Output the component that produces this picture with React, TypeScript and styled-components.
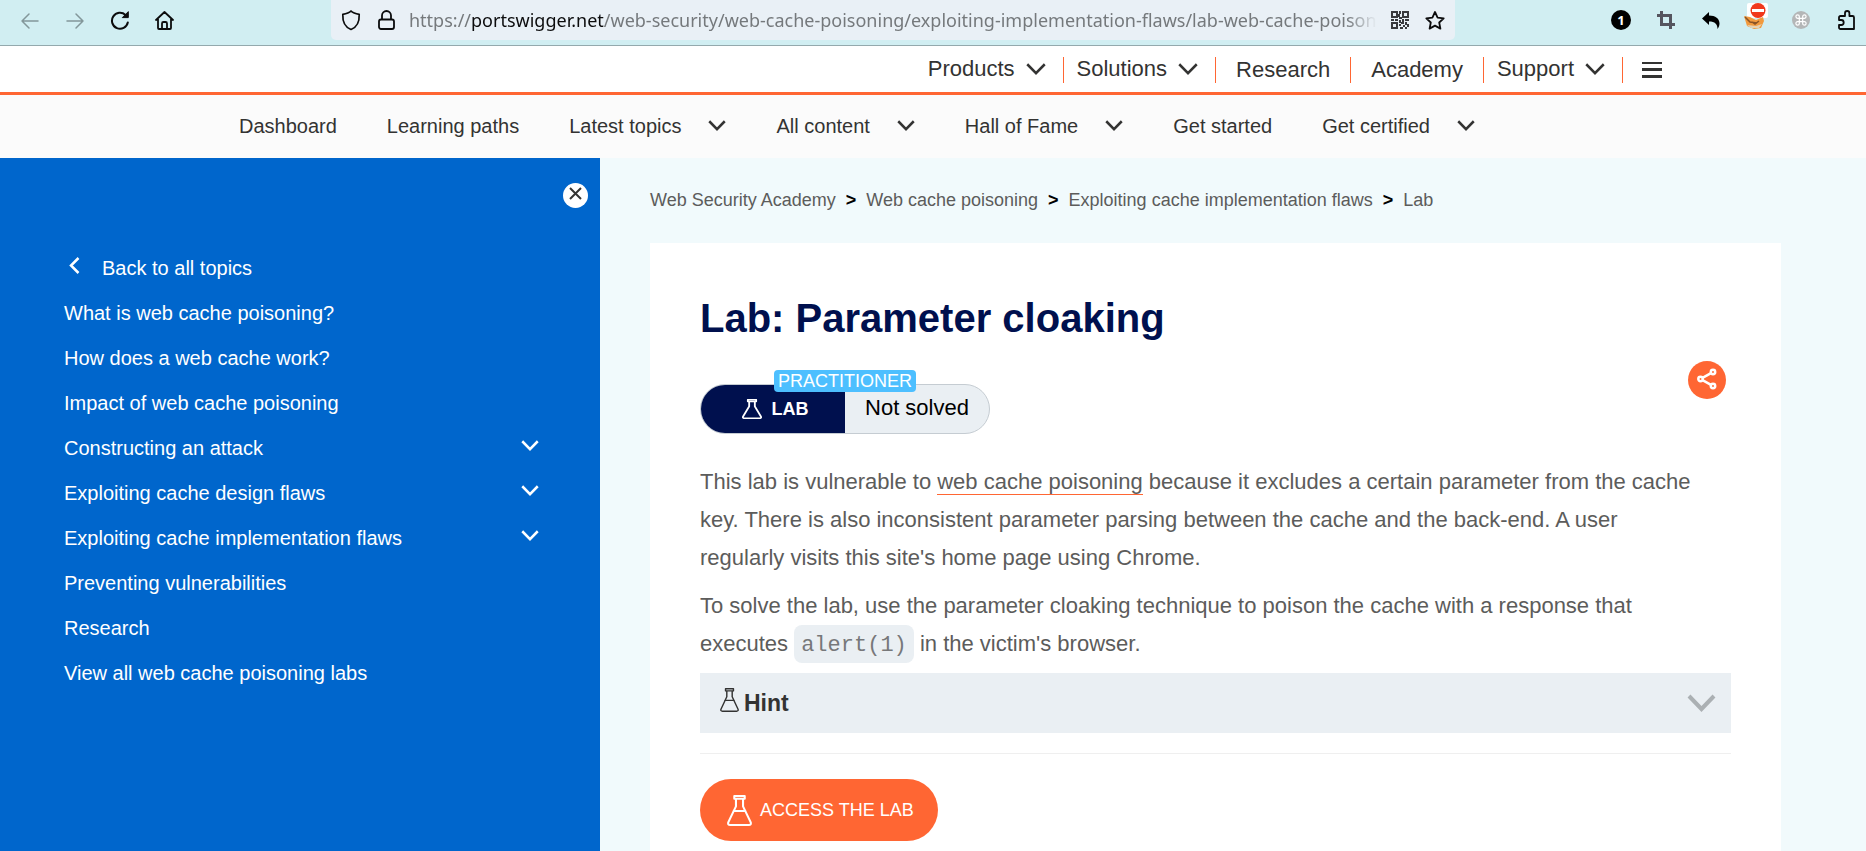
import React from "react";
import styled, { createGlobalStyle } from "styled-components";

const Global = createGlobalStyle`
  *, *::before, *::after { box-sizing: border-box; }
  body {
    margin: 0;
    background: #f1fafc;
    font-family: "Liberation Sans", Arial, sans-serif;
    color: #333332;
  }
  button { font: inherit; color: inherit; background: none; border: 0; padding: 0; cursor: pointer; }
  a { color: inherit; text-decoration: none; }
  svg { display: block; flex: none; }
  ul, ol { list-style: none; margin: 0; padding: 0; }
`;

const Page = styled.div`
  display: flex;
  flex-direction: column;
  min-height: 100vh;
`;

/* Browser toolbar */

const Toolbar = styled.div`
  display: flex;
  align-items: flex-start;
  height: 46px;
  padding: 0 10px 0 20px;
  background: #d1eef2;
  border-bottom: 1px solid #94a9ad;
`;

const ToolGroup = styled.div<{ $gap: number }>`
  display: flex;
  align-items: center;
  gap: ${(p) => p.$gap}px;
  height: 40px;
`;

const ToolButton = styled.button<{ $dim?: boolean }>`
  display: flex;
  align-items: center;
  justify-content: center;
  width: 20px;
  height: 40px;
  color: ${(p) => (p.$dim ? "#83979a" : "#0c0c0d")};
`;

const AddressBar = styled.div`
  display: flex;
  align-items: center;
  flex: 1;
  min-width: 0;
  height: 40px;
  margin: 0 156px 0 156px;
  padding: 0 10px;
  gap: 13px;
  background: #e9f0f6;
  border-radius: 0 0 5px 5px;
`;

const Address = styled.div`
  flex: 1;
  min-width: 0;
  overflow: hidden;
  white-space: nowrap;
  font: 18px/26px "Noto Sans", "Open Sans", sans-serif;
  color: #75797c;
  mask-image: linear-gradient(to left, transparent, #000 30px);
`;

const Host = styled.span`
  color: #0c0c0d;
`;

/* Site header */

const SiteHeader = styled.header`
  display: flex;
  justify-content: flex-end;
  align-items: center;
  height: 49px;
  padding: 2px 204px 0 20px;
  background: #fff;
  border-bottom: 3px solid #ff6633;
`;

const TopItem = styled.div<{ $menu?: boolean }>`
  display: flex;
  align-items: center;
  height: 26px;
  padding: ${(p) => (p.$menu ? "0 17px 2px 13px" : "0 20px")};
  border-right: 1px solid #ff6633;
  font-size: 22px;
  line-height: 26px;
`;

const MenuButton = styled.button<{ $gap: number }>`
  display: flex;
  align-items: center;
  gap: ${(p) => p.$gap}px;
  white-space: nowrap;
`;

const Burger = styled.button`
  margin-left: 19px;
`;

const SubNav = styled.nav`
  display: flex;
  align-items: center;
  gap: 50px;
  height: 63px;
  padding: 0 239px 2px;
  background: #fbfbfb;
  font-size: 20px;
  line-height: 24px;
  white-space: nowrap;
`;

/* Body */

const Body = styled.div`
  display: flex;
  flex: 1;
`;

const Sidebar = styled.aside`
  display: flex;
  flex-direction: column;
  flex: 0 0 600px;
  padding: 25px 12px 40px 64px;
  background: #0066cc;
  color: #fff;
`;

const CloseButton = styled.button`
  display: flex;
  justify-content: center;
  align-self: flex-end;
  width: 25px;
  height: 25px;
  padding-top: 4px;
  border-radius: 50%;
  background: #fff;
  color: #333332;
`;

const TopicList = styled.ul`
  margin: 38px 49px 0 0;
  font-size: 20px;
  line-height: 45px;
`;

const Topic = styled.li`
  display: flex;
  align-items: center;
  justify-content: space-between;
`;

const ExpandButton = styled.button`
  padding-bottom: 6px;
`;

const BackLink = styled.a`
  display: flex;
  align-items: center;
  gap: 22px;
  padding-left: 5px;
`;

const Main = styled.main`
  display: flex;
  flex-direction: column;
  flex: 1;
  min-width: 0;
  padding: 30px 85px 0 50px;
`;

const Crumbs = styled.ol`
  display: flex;
  flex-wrap: wrap;
  margin-bottom: 31px;
  font-size: 18px;
  line-height: 24px;
  color: #5c5c5b;
`;

const Crumb = styled.li`
  & + &::before {
    content: ">";
    margin: 0 10px;
    color: #000;
    font-weight: bold;
  }
`;

const Card = styled.article`
  flex: 1;
  padding: 50px 50px 11px;
  background: #fff;
`;

const Title = styled.h1`
  margin: 0 0 18px;
  font-size: 40px;
  line-height: 50px;
  color: #00104e;
`;

const StatusRow = styled.div`
  display: flex;
  justify-content: space-between;
  align-items: flex-start;
  padding-right: 5px;
  margin-bottom: 29px;
`;

const Status = styled.div`
  position: relative;
  display: flex;
  width: 290px;
  height: 50px;
  margin-top: 23px;
  border: 1px solid #c5ccd2;
  border-radius: 25px;
  background: #eaeff3;
`;

const StatusKind = styled.div`
  display: flex;
  align-items: center;
  justify-content: center;
  gap: 10px;
  width: 144px;
  padding-left: 4px;
  border-radius: 24px 0 0 24px;
  background: #00104e;
  color: #fff;
  font-size: 18px;
  font-weight: bold;
`;

const StatusText = styled.div`
  flex: 1;
  text-align: center;
  font-size: 22px;
  line-height: 46px;
  color: #000;
`;

const Level = styled.span`
  position: absolute;
  top: -15px;
  left: 73px;
  width: 142px;
  border-radius: 4px;
  background: #4dbfff;
  color: #fff;
  font-size: 18px;
  line-height: 22px;
  text-align: center;
`;

const ShareButton = styled.button`
  display: flex;
  justify-content: center;
  width: 38px;
  height: 38px;
  padding-top: 7px;
  border-radius: 50%;
  background: #ff6633;
  color: #fff;
`;

const Text = styled.p`
  margin: 0 0 10px;
  padding-right: 25px;
  font-size: 22px;
  line-height: 38px;
  color: #5c5c5b;
`;

const TextLink = styled.a`
  border-bottom: 1px solid #ff6633;
`;

const Code = styled.code`
  padding: 8px 7px 5px;
  border-radius: 8px;
  background: #eaeff3;
  color: #77787a;
  font-family: "Liberation Mono", monospace;
  font-size: 22px;
  line-height: 22px;
`;

const Hint = styled.button`
  display: flex;
  align-items: center;
  width: 100%;
  height: 60px;
  padding: 0 15px 0 20px;
  background: #eaeff3;
  color: #abb0b3;
`;

const HintLabel = styled.span`
  display: flex;
  flex: 1;
  gap: 5px;
  color: #333332;
  font-size: 23px;
  font-weight: bold;
  line-height: 30px;
`;

const Rule = styled.hr`
  margin: 20px 0 25px;
  border: 0;
  border-top: 1px solid #efefef;
`;

const AccessLink = styled.a`
  display: inline-flex;
  align-items: center;
  gap: 8px;
  height: 62px;
  padding: 0 24px 0 27px;
  border-radius: 31px;
  background: #ff6633;
  color: #fff;
  font-size: 18px;
`;

/* Icons */

const Chevron = ({ w = 18, h = 11, stroke = 2.5 }: { w?: number; h?: number; stroke?: number }) => (
  <svg width={w} height={h} viewBox={`0 0 ${w} ${h}`} fill="none" stroke="currentColor" strokeWidth={stroke} aria-hidden>
    <path d={`M${stroke / 2} ${stroke / 2}L${w / 2} ${h - stroke * 0.75}L${w - stroke / 2} ${stroke / 2}`} />
  </svg>
);

const Flask = ({ w, h, stroke, liquid }: { w: number; h: number; stroke: number; liquid?: boolean }) => (
  <svg width={w} height={h} viewBox="0 0 24 30" preserveAspectRatio="none" fill="none" stroke="currentColor" strokeWidth={stroke} strokeLinejoin="round" strokeLinecap="round" aria-hidden>
    <path d="M7 1h10v2.600H7zM8.600 3.600V11L1.200 26.500Q.6 29 3 29H21Q23.400 29 22.800 26.500L15.400 11V3.600" />
    {liquid && <path d="M6.500 15.500h11" />}
  </svg>
);

const line = { fill: "none", stroke: "currentColor", strokeWidth: 2, strokeLinecap: "round", strokeLinejoin: "round" } as const;

const BackIcon = () => (
  <svg width="20" height="20" viewBox="0 0 20 20" {...line} strokeWidth={1.5} aria-hidden>
    <path d="M18 11H2M9 4L2 11l7 7" />
  </svg>
);

const ForwardIcon = () => (
  <svg width="20" height="20" viewBox="0 0 20 20" {...line} strokeWidth={1.5} aria-hidden>
    <path d="M2 11h16M11 4l7 7-7 7" />
  </svg>
);

const ReloadIcon = () => (
  <svg width="20" height="20" viewBox="0 0 20 20" {...line} aria-hidden>
    <path d="M17.800 12.500A8 8 0 1 1 15.500 5" />
    <path d="M18.300 2v5.600h-5.600z" fill="currentColor" strokeWidth="1" />
  </svg>
);

const HomeIcon = () => (
  <svg width="20" height="20" viewBox="0 0 20 20" {...line} strokeWidth={1.8} aria-hidden>
    <path d="M1 10L9.500 2l8.500 8M3 9V18a1 1 0 0 0 1 1h11a1 1 0 0 0 1-1V9M7 19v-5.500a1.500 1.500 0 0 1 1.500-1.500h2a1.500 1.500 0 0 1 1.500 1.500V19" />
  </svg>
);

const ShieldIcon = () => (
  <svg width="20" height="22" viewBox="0 0 20 22" {...line} strokeWidth={1.7} aria-hidden>
    <path d="M10 2C8 4 4 5 1.800 5.400C1.500 12 3.500 18 10 20.500C16.500 18 18.500 12 18.200 5.400C16 5 12 4 10 2z" />
  </svg>
);

const LockIcon = () => (
  <svg width="17" height="22" viewBox="0 0 17 22" {...line} strokeWidth={1.8} aria-hidden>
    <rect x="1" y="10.500" width="15" height="9.500" rx="2" />
    <path d="M4 10V6.500a4.500 4.500 0 0 1 9 0V10" />
  </svg>
);

const QrIcon = () => (
  <svg width="18" height="18" viewBox="0 0 18 18" fill="#38393d" aria-hidden>
    <path fillRule="evenodd" d="M0 0h7v7H0zM2 2v3h3V2zM11 0h7v7h-7zM13 2v3h3V2zM0 11h7v7H0zM2 13v3h3v-3z" />
    <path d="M8 0h2v3H8zM7 3h2v3H7zM8 6h3v2H8zM0 8h3v2H0zM4 8h3v2H4zM8 9h2v3H8zM11 8h2v3h-2zM14 8h4v2h-4zM10 11h3v2h-3zM14 11h2v3h-2zM8 13h2v2H8zM12 14h2v2h-2zM16 13h2v3h-2zM9 16h3v2H9zM14 16h2v2h-2z" />
  </svg>
);

const StarIcon = () => (
  <svg width="20" height="21" viewBox="0 0 20 20" {...line} strokeWidth={1.8} aria-hidden>
    <path d="M10 1.500l2.600 5.600 6.100.7-4.500 4.200 1.200 6.100L10 15.100l-5.400 3 1.200-6.100L1.300 7.800l6.100-.7z" />
  </svg>
);

const Badge = styled.span`
  display: flex;
  align-items: center;
  justify-content: center;
  width: 20px;
  height: 20px;
  border-radius: 50%;
  background: #000;
  color: #fff;
  font: bold 13px/20px "Open Sans", sans-serif;
`;

const CropIcon = () => (
  <svg width="18" height="18" viewBox="0 0 18 18" fill="none" stroke="#55555f" strokeWidth="3" aria-hidden>
    <path d="M0 4.500h13.500V18M4.500 0v13.500H18" />
  </svg>
);

const ReplyIcon = () => (
  <svg width="18" height="17" viewBox="0 0 18 17" fill="#000" aria-hidden>
    <path d="M7 0v3.500c6.500 0 10.500 3 10.500 8 0 2-.8 4-2 5.500C15.500 12 13 9.500 7 9.500V13L0 6.500z" />
  </svg>
);

const FoxIcon = () => (
  <svg width="24" height="34" viewBox="0 0 24 34" aria-hidden>
    <rect x="3" y="0" width="21" height="15" rx="2" fill="#fff" />
    <path d="M0 13l6 1 6 3 7-3 1 4-3 7-7 1-7-3z" fill="#f29a3e" />
    <path d="M3 22l4 3h8l3-4-6 2z" fill="#e4d2b4" />
    <path d="M1 14l5 5 7 1M8 19l3 2 4-3" fill="none" stroke="#8a5426" strokeWidth="1.500" />
    <circle cx="14" cy="7.500" r="7.500" fill="#f0381c" />
    <path d="M8 6h12v3H8z" fill="#fff" />
  </svg>
);

const CommandIcon = () => (
  <svg width="18" height="18" viewBox="0 0 18 18" aria-hidden>
    <circle cx="9" cy="9" r="9" fill="#b4b6b7" />
    <path d="M7.300 7.300h3.400v3.400H7.300zM7.300 7.300H5.600a1.700 1.700 0 1 1 1.700-1.700zM10.700 7.300V5.600a1.700 1.700 0 1 1 1.700 1.700zM10.700 10.700h1.700a1.700 1.700 0 1 1-1.700 1.700zM7.300 10.700v1.700a1.700 1.700 0 1 1-1.700-1.700z" fill="none" stroke="#fff" strokeWidth="1.200" />
  </svg>
);

const PuzzleIcon = () => (
  <svg width="20" height="22" viewBox="0 0 20 22" {...line} strokeWidth={1.8} aria-hidden>
    <path d="M3 11V8.500a1.500 1.500 0 0 1 1.500-1.500H9V4.200a2.200 2.200 0 0 1 4.400 0V7H16.500A1.500 1.500 0 0 1 18 8.500V20H4.500A1.500 1.500 0 0 1 3 18.500V16H5.200a2.500 2.500 0 0 0 0-5z" />
  </svg>
);

const BurgerIcon = () => (
  <svg width="20" height="16" viewBox="0 0 20 16" fill="currentColor" aria-hidden>
    <path d="M0 0h20v2H0zM0 6h20v3H0zM0 13h20v3H0z" />
  </svg>
);

const CrossIcon = () => (
  <svg width="13" height="13" viewBox="0 0 13 13" fill="none" stroke="currentColor" strokeWidth="2" aria-hidden>
    <path d="M1 1l11 11M12 1L1 12" />
  </svg>
);

const LeftIcon = () => (
  <svg width="11" height="23" viewBox="0 0 11 23" fill="none" stroke="currentColor" strokeWidth="2.500" aria-hidden>
    <path d="M9.500 1L2 8.500 9.500 16" />
  </svg>
);

const ShareIcon = () => (
  <svg width="20" height="22" viewBox="0 0 20 22" fill="none" stroke="currentColor" strokeWidth="2.500" aria-hidden>
    <circle cx="3.500" cy="11" r="2.200" />
    <circle cx="16" cy="4" r="2.200" />
    <circle cx="16" cy="18" r="2.200" />
    <path d="M5.500 9.900L14 5.100M5.500 12.100L14 16.900" />
  </svg>
);

/* Data */

const topNav = [
  { label: "Products", menu: true },
  { label: "Solutions", menu: true },
  { label: "Research" },
  { label: "Academy" },
  { label: "Support", menu: true },
];

const subNav = [
  { label: "Dashboard" },
  { label: "Learning paths" },
  { label: "Latest topics", menu: true },
  { label: "All content", menu: true },
  { label: "Hall of Fame", menu: true },
  { label: "Get started" },
  { label: "Get certified", menu: true },
];

const topics = [
  { label: "What is web cache poisoning?" },
  { label: "How does a web cache work?" },
  { label: "Impact of web cache poisoning" },
  { label: "Constructing an attack", menu: true },
  { label: "Exploiting cache design flaws", menu: true },
  { label: "Exploiting cache implementation flaws", menu: true },
  { label: "Preventing vulnerabilities" },
  { label: "Research" },
  { label: "View all web cache poisoning labs" },
];

const crumbs = ["Web Security Academy", "Web cache poisoning", "Exploiting cache implementation flaws", "Lab"];

export default function App() {
  return (
    <Page>
      <Global />
      <Toolbar>
        <ToolGroup $gap={25}>
          <ToolButton $dim aria-label="Back"><BackIcon /></ToolButton>
          <ToolButton $dim aria-label="Forward"><ForwardIcon /></ToolButton>
          <ToolButton aria-label="Reload"><ReloadIcon /></ToolButton>
          <ToolButton aria-label="Home"><HomeIcon /></ToolButton>
        </ToolGroup>
        <AddressBar>
          <ToolGroup $gap={15}>
            <ToolButton aria-label="Tracking protection"><ShieldIcon /></ToolButton>
            <ToolButton aria-label="Site security"><LockIcon /></ToolButton>
          </ToolGroup>
          <Address role="textbox" tabIndex={0} aria-label="Address">
            https://<Host>portswigger.net</Host>/web-security/web-cache-poisoning/exploiting-implementation-flaws/lab-web-cache-poisoning
          </Address>
          <ToolGroup $gap={15}>
            <ToolButton aria-label="QR code"><QrIcon /></ToolButton>
            <ToolButton aria-label="Bookmark"><StarIcon /></ToolButton>
          </ToolGroup>
        </AddressBar>
        <ToolGroup $gap={25}>
          <ToolButton aria-label="Notifications"><Badge>1</Badge></ToolButton>
          <ToolButton aria-label="Crop"><CropIcon /></ToolButton>
          <ToolButton aria-label="Undo"><ReplyIcon /></ToolButton>
          <ToolButton aria-label="Proxy"><FoxIcon /></ToolButton>
          <ToolButton aria-label="Shortcuts"><CommandIcon /></ToolButton>
          <ToolButton aria-label="Extensions"><PuzzleIcon /></ToolButton>
        </ToolGroup>
      </Toolbar>

      <SiteHeader>
        {topNav.map((item) => (
          <TopItem key={item.label} $menu={item.menu}>
            {item.menu ? (
              <MenuButton $gap={11}>{item.label}<Chevron w={20} h={12} /></MenuButton>
            ) : (
              <a href="#">{item.label}</a>
            )}
          </TopItem>
        ))}
        <Burger aria-label="Menu"><BurgerIcon /></Burger>
      </SiteHeader>

      <SubNav>
        {subNav.map((item) =>
          item.menu ? (
            <MenuButton key={item.label} $gap={27}>{item.label}<Chevron /></MenuButton>
          ) : (
            <a key={item.label} href="#">{item.label}</a>
          )
        )}
      </SubNav>

      <Body>
        <Sidebar>
          <CloseButton aria-label="Close"><CrossIcon /></CloseButton>
          <TopicList>
            <Topic><BackLink href="#"><LeftIcon />Back to all topics</BackLink></Topic>
            {topics.map((t) => (
              <Topic key={t.label}>
                <a href="#">{t.label}</a>
                {t.menu && <ExpandButton aria-label={"Expand " + t.label}><Chevron /></ExpandButton>}
              </Topic>
            ))}
          </TopicList>
        </Sidebar>

        <Main>
          <Crumbs>
            {crumbs.map((c) => (
              <Crumb key={c}><a href="#">{c}</a></Crumb>
            ))}
          </Crumbs>
          <Card>
            <Title>Lab: Parameter cloaking</Title>
            <StatusRow>
              <Status>
                <StatusKind><Flask w={20} h={20} stroke={2.2} />LAB</StatusKind>
                <StatusText>Not solved</StatusText>
                <Level>PRACTITIONER</Level>
              </Status>
              <ShareButton aria-label="Share"><ShareIcon /></ShareButton>
            </StatusRow>
            <Text>
              This lab is vulnerable to <TextLink href="#">web cache poisoning</TextLink> because it excludes a certain
              parameter from the cache key. There is also inconsistent parameter parsing between the cache and the
              back-end. A user regularly visits this site's home page using Chrome.
            </Text>
            <Text>
              To solve the lab, use the parameter cloaking technique to poison the cache with a response that
              executes <Code>alert(1)</Code> in the victim's browser.
            </Text>
            <Hint>
              <HintLabel><Flask w={19} h={24} stroke={1.8} liquid />Hint</HintLabel>
              <Chevron w={29} h={18} stroke={4} />
            </Hint>
            <Rule />
            <AccessLink href="#"><Flask w={25} h={31} stroke={2} liquid />ACCESS THE LAB</AccessLink>
          </Card>
        </Main>
      </Body>
    </Page>
  );
}
